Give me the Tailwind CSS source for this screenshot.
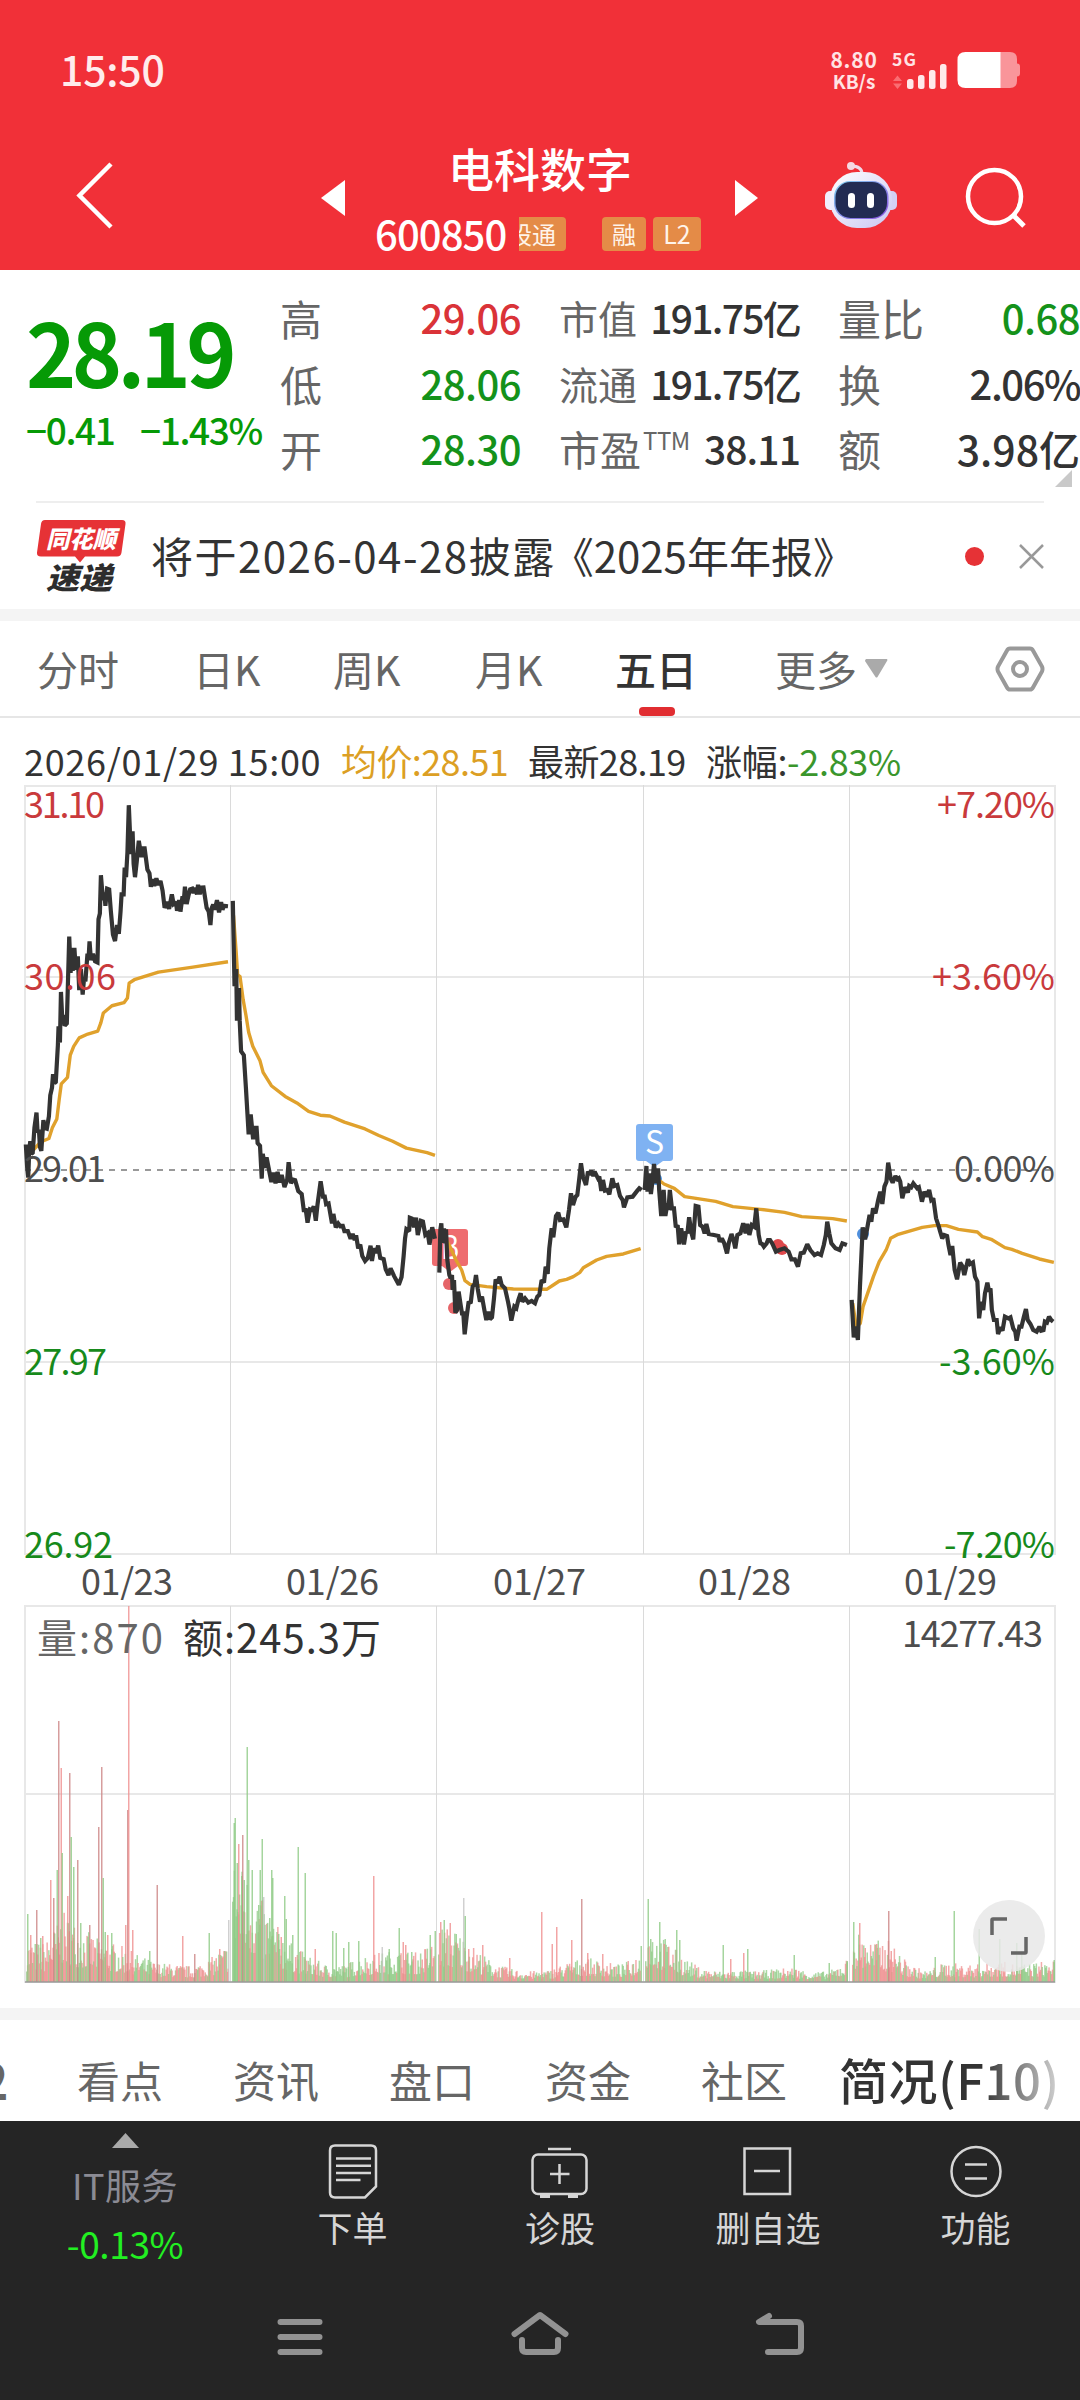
<!DOCTYPE html>
<html lang="zh-CN">
<head>
    <meta charset="UTF-8">
    <meta name="viewport" content="width=device-width, initial-scale=1.0">
    <title>电科数字 600850</title>
    <script src="https://cdn.jsdelivr.net/npm/@tailwindcss/browser@4"></script>
    <style>
        body {
            font-family: 'Noto Sans CJK SC', 'Noto Sans', sans-serif;
        }
    </style>
</head>
<body class="w-[1080px] h-[2400px] overflow-hidden bg-white text-[#333] whitespace-nowrap">

    <!-- 顶部 -->
    <header class="h-[270px] bg-[#f13038] text-white">
        <div class="h-[142px] pl-[60px] pr-[60px] flex items-center justify-between">
            <span class="-mt-[6px] text-[41px] font-medium leading-none tracking-[-0.2px] text-[#ffecec]">15:50</span>
            <div class="flex items-center">
                <div class="w-[52px] mr-3 -mt-[2px] text-center text-[#ffe3e4] font-bold text-[21px] leading-[22px]">
                    <div class="tracking-[0.8px]">8.80</div>
                    <div class="text-[19px]">KB/s</div>
                </div>
                <svg class="w-[128px] h-[44px]" viewBox="892 50 128 44">
                    <text x="892" y="67" font-size="17.5" font-weight="700" fill="#ffe3e4" textLength="24">5G</text>
                    <path d="M893 82l4.500-5.500 4.500 5.500zM893 84.500h9l-4.500 5.500z" fill="#fa6d72"/>
                    <g fill="#ffe9ea">
                        <rect x="907" y="80" width="6.500" height="10" rx="2.500"/>
                        <rect x="918" y="76" width="6.500" height="14" rx="2.500"/>
                        <rect x="929" y="71" width="6.500" height="19" rx="2.500"/>
                        <rect x="940" y="65" width="6.500" height="25" rx="2.500"/>
                    </g>
                    <path d="M1000 53h10q7 0 7 7v4.500q3 0 3 3v7q0 3-3 3v4.500q0 7-7 7h-10z" fill="#f9959a"/>
                    <path d="M1000.500 53h-35q-8 0-8 8v20q0 8 8 8h35z" fill="#fff"/>
                </svg>
            </div>
        </div>
        <div class="h-[128px] flex">
            <svg class="ml-[70px] mt-[18px] w-[46px] h-[72px]" viewBox="70 160 46 72" fill="none" stroke="#fff" stroke-width="4.500"><path d="M111 164L79.500 195.500 111 227"/></svg>
            <svg class="ml-[205px] mt-[38px] w-[24px] h-[36px]" viewBox="0 0 24 36"><path d="M24 0v36L0 18z" fill="#fff"/></svg>
            <div class="w-[390px] flex flex-col items-center">
                <h1 class="mt-[0px] text-[46px] font-medium leading-[50px]">电科数字</h1>
                <div class="mt-[21px] flex items-center h-[42px] self-start ml-[30px]">
                    <span class="-mt-[3px] text-[40px] font-medium leading-[42px] tracking-[-0.9px] w-[144px]">600850</span>
                    <span class="w-[47px] h-[34px] rounded-r-sm bg-[#e48b47] text-[24px] leading-[33px] text-[#fff4ea] overflow-hidden flex justify-end pr-[10px]"><span>股通</span></span>
                    <span class="ml-[36px] w-[44px] h-[34px] rounded-sm bg-[#e48b47] text-[24px] leading-[33px] text-[#fff4ea] text-center">融</span>
                    <span class="ml-[7px] w-[48px] h-[34px] rounded-sm bg-[#e48b47] text-[25px] leading-[33px] text-[#fff4ea] text-center">L2</span>
                </div>
            </div>
            <svg class="mt-[38px] w-[23px] h-[36px]" viewBox="0 0 23 36"><path d="M0 0v36L23 18z" fill="#fff"/></svg>
            <svg class="ml-[67px] mt-[18px] w-[72px] h-[70px]" viewBox="825 160 72 70">
                <defs>
                    <linearGradient id="shell" x1="0" y1="0" x2="1" y2="1"><stop offset="0" stop-color="#fff"/><stop offset=".55" stop-color="#e3e0f8"/><stop offset="1" stop-color="#c9c8f2"/></linearGradient>
                    <linearGradient id="rim" x1="0" y1="0" x2="1" y2="1"><stop offset="0" stop-color="#7fd0ee"/><stop offset="1" stop-color="#8a4fe0"/></linearGradient>
                </defs>
                <path d="M851 166q11 0 11 8" fill="none" stroke="#f0dcea" stroke-width="3"/>
                <circle cx="851" cy="166" r="4" fill="#f6d9e2"/>
                <rect x="825" y="191" width="12" height="19" rx="5" fill="#f0eefc"/>
                <rect x="885" y="191" width="12" height="19" rx="5" fill="#d3d0f4"/>
                <rect x="830" y="172" width="62" height="56" rx="27" fill="url(#shell)"/>
                <rect x="834" y="181" width="54.500" height="38" rx="16" fill="url(#rim)"/>
                <rect x="835.500" y="182" width="51.500" height="36" rx="15" fill="#222b52"/>
                <rect x="848" y="193" width="7" height="15" rx="3.500" fill="#fff"/>
                <rect x="867" y="193" width="7" height="15" rx="3.500" fill="#fff"/>
            </svg>
            <svg class="ml-[67px] mt-[24px] w-[64px] h-[64px]" viewBox="964 166 64 64" fill="none" stroke="#fff" stroke-width="4.500"><circle cx="994.500" cy="196.500" r="26.500"/><path d="M1013 215l11 11" stroke-width="5"/></svg>
        </div>
    </header>

    <!-- 行情 -->
    <section class="relative h-[231px] flex overflow-hidden">
        <div class="w-[280px] pl-[26px] text-[#069a06] font-medium">
            <div class="mt-[34px] h-[92px] text-[88px] leading-[92px] font-bold tracking-[-4.8px]"><span class="inline-block origin-left scale-x-[0.97]">28.19</span></div>
            <div class="mt-[11px] flex text-[37px] leading-[44px] tracking-[-1.4px]"><span class="w-[114px]">−0.41</span><span>−1.43%</span></div>
        </div>
        <div class="w-[241px] pt-[15px] text-[42px] leading-[65.500px] text-[#666]">
            <div class="flex justify-between"><span>高</span><span class="text-[40px] font-medium text-[#da3338] tracking-[-0.5px]">29.06</span></div>
            <div class="flex justify-between"><span>低</span><span class="text-[40px] font-medium text-[#14921a] tracking-[-0.5px]">28.06</span></div>
            <div class="flex justify-between"><span>开</span><span class="text-[40px] font-medium text-[#14921a] tracking-[-0.5px]">28.30</span></div>
        </div>
        <div class="ml-[38px] w-[241px] pt-[15px] text-[39px] leading-[65.500px] text-[#666]">
            <div class="flex justify-between"><span>市值</span><span class="font-medium text-[#333] tracking-[-1.7px]">191.75亿</span></div>
            <div class="flex justify-between"><span>流通</span><span class="font-medium text-[#333] tracking-[-1.7px]">191.75亿</span></div>
            <div class="flex justify-between"><span class="flex text-[41px]">市盈<span class="ml-[2px] -mt-[9px] text-[24px] tracking-[-0.5px]">TTM</span></span><span class="font-medium text-[#333] tracking-[-0.9px]">38.11</span></div>
        </div>
        <div class="ml-[38px] w-[242px] pt-[15px] text-[43px] leading-[65.500px] text-[#666]">
            <div class="flex justify-between"><span>量比</span><span class="text-[40px] font-medium text-[#14921a] tracking-[-0.5px]">0.68</span></div>
            <div class="flex justify-between"><span>换</span><span class="text-[40px] font-medium text-[#333] tracking-[-1.5px]">2.06%</span></div>
            <div class="flex justify-between"><span>额</span><span class="text-[41px] font-medium text-[#333]">3.98亿</span></div>
        </div>
        <svg class="absolute left-[1055px] top-[200px] w-[17px] h-[17px]" viewBox="0 0 17 17"><path d="M17 0v17H0z" fill="#c9c9c9"/></svg>
    </section>

    <!-- 公告 -->
    <section class="mx-[36px] h-[108px] border-t-2 border-[#eee] flex items-center">
        <svg class="w-[92px] h-[76px]" viewBox="36 517 92 76" font-weight="900" font-style="italic">
            <path d="M45 519h77q4 0 3.500 4l-4 28.500q-.5 4-4.500 4H85l-5 6-5-6H41q-4.500 0-4-4L41 523q.5-4 4-4z" fill="#e63236"/>
            <text x="46" y="547" font-size="24" fill="#fff" textLength="70" lengthAdjust="spacingAndGlyphs">同花顺</text>
            <text x="46" y="588" font-size="30" fill="#2d2d2d" textLength="66" lengthAdjust="spacingAndGlyphs">速递</text>
        </svg>
        <span class="ml-[23px] -mt-[2px] text-[42px] leading-none"><span class="tracking-[1.5px]">将于2026-04-28披露</span><span class="-ml-[4px]">《2025年年报》</span></span>
        <span class="ml-auto size-[19px] rounded-full bg-[#e63236]"></span>
        <svg class="ml-[35px] w-[25px] h-[25px]" viewBox="0 0 25 25" stroke="#999" stroke-width="2.500"><path d="M1 1l23 23M24 1L1 24"/></svg>
    </section>
    <div class="h-[12px] bg-[#f4f4f4]"></div>

    <!-- 周期切换 -->
    <nav class="h-[97px] border-b-2 border-[#e6e6e6] flex items-center text-[41px] text-[#666]">
        <span class="ml-[37px] w-[156px]">分时</span>
        <span class="w-[140px]">日K</span>
        <span class="w-[142px]">周K</span>
        <span class="w-[140px]">月K</span>
        <span class="relative h-full w-[160px] flex items-center font-medium text-[#333]">五日<i class="absolute left-[24px] bottom-0 w-[36px] h-[9px] rounded-[4px] bg-[#e12d31]"></i></span>
        <span>更多</span>
        <svg class="ml-[8px] w-[23px] h-[19px]" viewBox="0 0 23 19"><path d="M1 0h21q1 1 0 2L12.500 18q-1 1-2 0L0 2Q0 1 1 0z" fill="#aaa"/></svg>
        <svg class="ml-[107px] w-[50px] h-[48px]" viewBox="995 645 50 48" fill="none" stroke="#999" stroke-width="4"><path d="M1010 648.500h20q2 0 3 2l9 16q1 2.500 0 5l-9 16q-1 2-3 2h-20q-2 0-3-2l-9-16q-1-2.500 0-5l9-16q1-2 3-2z"/><circle cx="1020" cy="669" r="7"/></svg>
    </nav>

    <!-- 五日走势 -->
    <div class="h-[67px] pt-[17px] pl-[24px] flex text-[36px] leading-[50px]">
        <span class="w-[317px] tracking-[0.7px]">2026/01/29 15:00</span>
        <span class="w-[187px] text-[#dc9f24] tracking-[-0.6px]">均价:28.51</span>
        <span class="w-[178px] tracking-[-0.6px]">最新28.19</span>
        <span class="tracking-[-0.3px]">涨幅:<span class="text-[#3a962c]">-2.83%</span></span>
    </div>
    <svg class="block w-[1080px] h-[815px]" viewBox="0 785 1080 815" fill="none">
        <g stroke="#e8e8e8" stroke-width="2">
            <path d="M25 786h1030V1554H25z"/>
            <path d="M25 977h1030M25 1362h1030"/>
            <path d="M230.500 785v769M436.500 785v769M643.500 785v769M849.500 785v769" stroke-width="1" stroke="#dadada"/>
        </g>
        <path d="M25 1170h1030" stroke="#999" stroke-width="2" stroke-dasharray="6 6"/>
        <g fill="#ee6c6f"><rect x="432" y="1229" width="36" height="37" rx="3"/><path d="M442 1266h16l-8 6z"/></g>
        <g fill="#e56468"><circle cx="449" cy="1284" r="6"/><circle cx="454" cy="1308" r="6"/></g>
        <text x="441" y="1259" font-size="32" fill="#fff" textLength="18" lengthAdjust="spacingAndGlyphs">B</text>
        <g fill="#7fb2f2"><rect x="636" y="1124" width="37" height="37" rx="3"/><path d="M646 1161h17l-8.500 6z"/></g>
        <text x="645" y="1154" font-size="32" fill="#fff">S</text>
        <circle cx="656" cy="1179" r="6" fill="#4f96e4"/>
        <circle cx="863" cy="1234" r="6" fill="#4f8fdc"/>
        <g fill="#e0484c"><circle cx="778" cy="1245" r="6"/><circle cx="782" cy="1249" r="6"/></g>

        <!-- 均价线 -->
        <g stroke="#e0a12c" stroke-width="3.400" stroke-linejoin="round">
            <g transform="translate(0 770) scale(.3444 .3827)">
                <polyline vector-effect="non-scaling-stroke" points="78,1000 100,990 118,972 142,963 152,935 165,912 172,860 178,820 196,803 204,745 214,722 230,700 255,690 284,682 293,660 300,635 325,616 360,608 370,596 375,557 390,548 460,528 560,515 662,501"/>
                <polyline vector-effect="non-scaling-stroke" points="678,380 686,480 690,535 697,540 706,600 714,640 722,685 734,722 755,760 764,790 788,825 828,853 862,870 896,892 930,902 958,904 1000,920 1060,938 1100,955 1140,970 1180,988 1240,1000 1263,1007"/>
            </g>
            <g transform="translate(400 1120) scale(.3333)">
                <polyline vector-effect="non-scaling-stroke" points="125,335 150,380 168,420 185,450 195,482 210,493 260,500 340,507 440,508 460,495 478,483 500,478 520,470 540,457 550,443 590,420 620,409 670,402 722,386"/>
            </g>
            <g transform="translate(540 1100) scale(.3444 .3333)">
                <polyline vector-effect="non-scaling-stroke" points="345,240 360,252 390,265 420,290 510,304 560,320 640,328 710,337 760,350 850,356 891,363"/>
                <polyline vector-effect="non-scaling-stroke" points="908,610 918,680 930,670 938,620 968,530 985,485 1005,450 1018,415 1040,403 1110,382 1145,377 1180,377 1215,388 1270,396 1285,410 1310,418 1350,443 1370,448 1400,460 1450,477 1492,487"/>
            </g>
        </g>

        <!-- 分时线 -->
        <g stroke="#333" stroke-width="4.200" stroke-linejoin="miter" stroke-miterlimit="2">
            <g transform="translate(0 770) scale(.3444 .3827)">
                <polyline vector-effect="non-scaling-stroke" points="75,978 79,1040 82,1065 85,990 88,970 91,1003 95,1000 100,935 106,895 109,945 113,940 116,985 120,995 126,915 130,935 136,937 142,905 146,850 151,830 154,795 158,818 162,815 168,720 170,670 174,712 177,580 181,655 184,640 188,668 194,662 201,435 205,530 209,465 212,525 216,465 220,522 226,487 230,575 235,520 240,587 244,545 248,552 254,480 257,495 260,448 264,497 270,480 276,500 283,503 286,390 290,375 293,275 299,340 303,320 306,355 311,310 317,312 322,370 328,430 334,447 340,405 345,428 350,370 353,325 359,325 362,255 366,280 370,215 374,92 380,220 385,160 388,245 392,280 397,240 403,185 411,228 415,205 420,205 428,260 434,270 438,305 444,285 448,303 454,283 460,300 466,290 472,315 478,360 486,345 491,363 499,325 504,350 511,345 514,368 520,340 524,370 530,330 533,350 537,305 542,350 548,325 552,312 558,310 562,322 566,308 572,325 575,300 580,325 584,303 588,322 590,302 600,360 606,370 611,405 615,360 619,352 624,365 630,340 636,372 642,345 646,365 650,355 662,356"/>
                <polyline vector-effect="non-scaling-stroke" points="676,342 681,565 686,520 688,655 694,570 696,655 700,735 708,745 714,830 722,952 728,900 735,965 740,935 745,935 748,975 755,982 760,1068 763,1003 770,1040 774,1012 780,1040 788,1077 794,1052 800,1080 806,1050 812,1078 818,1058 826,1090 834,1070 838,1025 845,1080 850,1070 857,1072 866,1100 876,1108 882,1150 888,1150 893,1183 900,1148 906,1150 911,1140 917,1178 922,1135 931,1075 938,1115 943,1115 947,1135 954,1133 964,1185 968,1160 975,1195 982,1185 990,1195 994,1187 1000,1205 1010,1205 1018,1225 1024,1212 1030,1228 1034,1216 1040,1250 1046,1240 1052,1270 1060,1283 1068,1275 1076,1243 1080,1283 1086,1250 1092,1262 1098,1243 1104,1275 1114,1278 1120,1305 1128,1320 1134,1302 1144,1322 1158,1345 1166,1325 1172,1270 1176,1225 1180,1200 1188,1205 1190,1170 1196,1172 1202,1195 1208,1170 1213,1215 1222,1178 1228,1180 1235,1215 1242,1210 1247,1240 1255,1195 1263,1225"/>
            </g>
            <g transform="translate(400 1120) scale(.3333)">
                <polyline vector-effect="non-scaling-stroke" points="118,458 121,330 124,310 127,368 132,325 136,370 138,328 142,420 148,465 152,475 156,465 158,510 162,480 166,578 171,570 176,515 182,555 186,580 190,580 194,643 200,590 206,545 212,550 218,500 224,492 228,465 233,505 240,545 246,530 254,575 259,600 265,575 270,598 276,592 282,535 287,478 292,490 299,470 305,495 315,505 324,545 328,565 334,602 343,560 349,565 355,540 362,520 367,545 375,535 385,548 395,543 405,550 412,530 418,525 425,480 432,488 437,440 443,462 448,385 452,350 455,325 460,352 468,288 475,278 480,300 490,298 499,322 507,270 513,220 519,255 527,230 532,225 538,175 543,130 549,170 558,195 564,155 570,165 574,152 580,168 584,155 594,175 598,170 604,213 609,180 615,212 622,210 628,223 637,175 643,198 652,195 660,228 668,240 672,262 682,232 698,230 712,212 718,205 725,210"/>
            </g>
            <g transform="translate(540 1100) scale(.3444 .3333)">
                <polyline vector-effect="non-scaling-stroke" points="304,270 309,198 312,275 317,220 322,282 327,240 331,192 337,250 343,205 346,270 352,348 359,270 364,348 370,310 373,330 377,270 383,325 389,325 394,378 400,380 404,433 410,385 414,410 418,433 424,395 428,400 433,352 440,400 445,418 452,318 460,320 465,375 472,380 478,400 483,372 490,402 505,405 518,408 522,425 528,415 535,430 543,460 548,430 556,402 562,420 567,445 573,405 582,400 590,370 597,400 602,372 608,405 615,375 622,380 628,325 635,405 640,430 645,432 650,440 658,430 662,420 668,420 675,432 685,455 695,450 710,445 722,455 730,478 740,478 749,500 757,460 766,458 776,433 785,450 797,465 806,460 816,465 824,435 830,405 834,365 840,400 846,430 858,445 870,450 878,430 891,435"/>
                <polyline vector-effect="non-scaling-stroke" points="905,600 911,712 917,680 923,720 929,560 937,382 944,418 950,385 957,345 962,365 967,325 974,340 982,300 988,275 994,312 1000,260 1006,245 1011,188 1018,235 1024,248 1032,228 1038,238 1042,235 1046,245 1052,295 1060,262 1068,278 1072,258 1078,262 1084,250 1095,265 1100,262 1104,280 1109,305 1116,275 1122,290 1130,270 1136,300 1142,295 1150,355 1158,380 1162,395 1168,415 1174,405 1182,408 1186,435 1192,465 1197,438 1204,510 1211,538 1220,488 1227,500 1232,525 1243,478 1249,492 1257,487 1263,530 1270,545 1275,655 1281,605 1287,630 1292,580 1299,548 1304,575 1308,565 1312,630 1318,660 1326,660 1330,702 1337,682 1343,692 1350,650 1360,655 1366,652 1374,685 1380,695 1384,722 1392,680 1398,680 1405,650 1411,627 1416,660 1424,672 1432,690 1442,695 1450,680 1455,692 1462,690 1466,665 1472,668 1478,650 1484,660 1490,665"/>
            </g>
        </g>

        <g font-size="36" fill="#c93a3c">
            <text x="24" y="818" textLength="81">31.10</text>
            <text x="24" y="990" textLength="92">30.06</text>
            <text x="937" y="818" textLength="118">+7.20%</text>
            <text x="932" y="990" textLength="123">+3.60%</text>
        </g>
        <g font-size="36" fill="#4d4d4d">
            <text x="24" y="1182" textLength="82">29.01</text>
            <text x="954" y="1182" textLength="101">0.00%</text>
            <text x="81" y="1595" textLength="92">01/23</text>
            <text x="286" y="1595" textLength="93">01/26</text>
            <text x="493" y="1595" textLength="93">01/27</text>
            <text x="698" y="1595" textLength="93">01/28</text>
            <text x="904" y="1595" textLength="93">01/29</text>
        </g>
        <g font-size="36" fill="#178a1b">
            <text x="24" y="1375" textLength="83">27.97</text>
            <text x="24" y="1558" textLength="89">26.92</text>
            <text x="939" y="1375" textLength="116">-3.60%</text>
            <text x="944" y="1558" textLength="111">-7.20%</text>
        </g>
    </svg>

    <!-- 成交量 -->
    <div class="relative h-[408px]">
        <svg class="block w-[1080px] h-[390px]" viewBox="0 1600 1080 390" fill="none">
            <g stroke="#e8e8e8" stroke-width="2">
                <path d="M25 1606h1030v376H25zM25 1794h1030"/>
                <path d="M230.500 1606v376M436.500 1606v376M643.500 1606v376M849.500 1606v376" stroke-width="1" stroke="#dadada"/>
            </g>
            <g id="volume"></g>
            <path d="M25 1982h1030" stroke="#999" stroke-opacity=".7" stroke-width="2"/>
            <text x="37" y="1653" font-size="40" fill="#666" textLength="126">量:870</text>
            <text x="183" y="1653" font-size="40" fill="#333" textLength="198">额:245.3万</text>
            <text x="902" y="1647" font-size="36" fill="#4d4d4d" textLength="141">14277.43</text>
        </svg>
        <button class="absolute left-[973px] top-[300px] size-[72px] rounded-full bg-[#e8e8e8]/85 flex items-center justify-center">
            <svg class="w-[38px] h-[38px]" viewBox="0 0 38 38" fill="none" stroke="#666" stroke-width="3.500"><path d="M2 18V3q0-1 1-1h14M36 20v15q0 1-1 1H21"/></svg>
        </button>
    </div>
    <div class="h-[12px] bg-[#f4f4f4]"></div>

    <!-- 资讯栏目 -->
    <nav class="relative h-[101px] pt-[17px] overflow-hidden flex items-center text-[43px] leading-[60px] text-[#666]">
        <span class="w-[78px] -ml-[20px] mr-[19px] text-[48px] font-bold">2</span>
        <span class="w-[156px]">看点</span>
        <span class="w-[156px]">资讯</span>
        <span class="w-[156px]">盘口</span>
        <span class="w-[156px]">资金</span>
        <span class="w-[138px]">社区</span>
        <span class="text-[49px] font-medium text-[#333] tracking-[0.6px]">简况(F10)</span>
        <div class="absolute right-0 top-0 w-[98px] h-full bg-linear-to-r from-white/0 to-white"></div>
    </nav>

    <!-- 底部 -->
    <footer class="h-[279px] bg-[#252525] text-[#d6d6d6]">
        <div class="h-[160px] flex text-[35px] leading-[40px]">
            <div class="w-[250px] flex flex-col items-center">
                <svg class="mt-[12px] w-[27px] h-[15px]" viewBox="0 0 27 15"><path d="M13.500 0L27 15H0z" fill="#aaa"/></svg>
                <div class="mt-[16px] text-[#8b8b94] text-[36px] tracking-[0.5px]">IT服务</div>
                <div class="mt-[19px] text-[#22f022] text-[37px] tracking-[-0.4px]">-0.13%</div>
            </div>
            <div class="w-[205px] flex flex-col items-center">
                <svg class="mt-[21px] w-[60px] h-[60px]" viewBox="322 2142 60 60" fill="none" stroke="#d6d6d6" stroke-width="2.500"><path d="M334 2145.500h36q5 0 5 5v36l-11 11h-30q-5 0-5-5v-42q0-5 5-5zM335 2158.500h35M335 2165.700h35M335 2173h35M335 2180h24.500"/></svg>
                <div class="mt-[5px]">下单</div>
            </div>
            <div class="w-[210px] flex flex-col items-center">
                <svg class="mt-[21px] w-[60px] h-[60px]" viewBox="530 2142 60 60" fill="none" stroke="#d6d6d6" stroke-width="2.500"><rect x="532.500" y="2154.500" width="54" height="39.500" rx="5.500"/><path d="M548 2149h23M550 2174h19.500M559.500 2164v20"/><path d="M540 2196h10M568 2196h10" stroke-width="4"/></svg>
                <div class="mt-[5px]">诊股</div>
            </div>
            <div class="w-[206px] flex flex-col items-center">
                <svg class="mt-[21px] w-[60px] h-[60px]" viewBox="738 2142 60 60" fill="none" stroke="#d6d6d6" stroke-width="2.500"><path d="M744.500 2148.500h45.500v45.500h-45.500zM754 2171h26"/></svg>
                <div class="mt-[5px]">删自选</div>
            </div>
            <div class="w-[209px] flex flex-col items-center">
                <svg class="mt-[21px] w-[60px] h-[60px]" viewBox="945.500 2142 60 60" fill="none" stroke="#d6d6d6" stroke-width="2.500"><circle cx="975.500" cy="2171.500" r="24.500"/><path d="M964.500 2164.500h22M964.500 2178.500h22"/></svg>
                <div class="mt-[5px]">功能</div>
            </div>
        </div>
        <div class="pt-[24px] flex" >
            <svg class="ml-[270px] w-[60px] h-[60px]" viewBox="270 2305 60 60" fill="none" stroke="#929292" stroke-width="6" stroke-linecap="round"><path d="M280.500 2322h39M280.500 2337h39M280.500 2352h39"/></svg>
            <svg class="ml-[180px] w-[60px] h-[60px]" viewBox="510 2305 60 60" fill="none" stroke="#929292" stroke-width="6" stroke-linecap="round" stroke-linejoin="round"><path d="M514.500 2334l25.500-19 25.500 19M522 2340v8q0 4 4 4h28q4 0 4-4v-8"/></svg>
            <svg class="ml-[180px] w-[60px] h-[60px]" viewBox="750 2305 60 60" fill="none" stroke="#929292" stroke-width="6" stroke-linecap="round" stroke-linejoin="round"><path d="M769 2316l-10 6h38q4 0 4 4v22q0 4-4 4h-29"/></svg>
        </div>
    </footer>

    <script>
        const RED = '#ef8f8f', GREEN = '#8fcb86', DARK = '#cc8585', GRAY = '#c4c4c4';

        // 每日成交量的大致包络
        const days = [
            { x: 26, env: [42, 40, 70, 55, 42, 38, 28, 20, 18, 16, 24, 40], red: 0.62 },
            { x: 232, env: [130, 105, 68, 42, 28, 18, 17, 26, 30, 32, 30, 42], red: 0.38 },
            { x: 438, env: [58, 52, 34, 19, 13, 11, 12, 20, 25, 20, 18, 30], red: 0.55 },
            { x: 645, env: [56, 46, 26, 14, 11, 12, 11, 13, 15, 10, 11, 24], red: 0.45 },
            { x: 852, env: [54, 42, 42, 19, 11, 20, 18, 18, 21, 18, 20, 23], red: 0.55 }
        ];

        // [x, 高度, 颜色]
        const spikes = [
            [27, 68, GREEN], [30, 47, RED], [36, 72, DARK], [40, 44, GREEN], [42, 46, RED], [50, 102, RED], [53, 84, DARK], [56.500, 112, GREEN], [58, 261, DARK],
            [60.500, 214, RED], [61.500, 129, GREEN], [67, 86, RED], [69, 209, DARK], [70.500, 145, GREEN], [73, 115, GREEN], [77, 122, DARK], [80, 59, GREEN],
            [89, 57, DARK], [98, 155, DARK], [101, 215, DARK], [102.500, 104, GREEN], [104.500, 50, GREEN], [107, 47, RED], [111, 49, GREEN], [125, 57, RED],
            [127, 172, DARK], [128, 376, RED], [132, 52, RED], [149, 31, GREEN], [156.500, 97, DARK], [182, 46, RED], [194, 28, DARK], [208.500, 49, GREEN], [219, 33, RED], [228, 62, GRAY],
            [233.500, 159, GREEN], [234.500, 164, GREEN], [236.500, 119, GREEN], [238, 138, RED], [241, 106, GREEN], [242, 147, DARK], [243.500, 102, GREEN], [246.500, 235, GREEN], [248, 122, GREEN],
            [251.500, 112, GREEN], [258, 77, GREEN], [259.500, 112, GREEN], [261.500, 143, GREEN], [263, 85, GRAY], [269, 64, GREEN], [271, 112, GREEN], [272, 104, GREEN],
            [278, 48, GREEN], [280.500, 45, RED], [284, 86, GREEN], [285.500, 63, GREEN], [292, 47, GREEN], [297.500, 135, GREEN], [304.500, 109, GREEN], [314.500, 33, RED],
            [332, 51, GREEN], [335.500, 49, GREEN], [343, 34, GREEN], [348, 40, GREEN], [358, 41, GREEN], [373, 106, RED], [381.500, 35, GRAY], [388.500, 33, GREEN], [398.500, 54, GREEN],
            [402.500, 40, RED], [405, 37, RED], [411, 30, GREEN], [429.500, 47, GREEN], [434.500, 51, GREEN],
            [440, 60, RED], [443.500, 62, GREEN], [449.500, 59, RED], [455.500, 48, GREEN], [463, 84, GRAY], [464.500, 66, GREEN], [468, 33, RED], [482, 37, RED],
            [509, 24, RED], [541, 70, RED], [551.500, 38, RED], [556, 55, RED], [571, 42, RED], [581, 83, DARK], [587, 29, RED], [602, 28, RED], [640.500, 36, GREEN],
            [647.500, 83, GREEN], [650, 43, GREEN], [659, 60, GREEN], [663.500, 38, RED], [676, 52, GREEN], [679, 42, GREEN], [722.500, 37, GREEN], [730, 23, RED], [743, 29, RED], [747, 33, GREEN],
            [793.500, 27, GREEN], [828.500, 19, GREEN], [846.500, 21, GREEN],
            [853, 60, GREEN], [859, 59, RED], [864.500, 34, RED], [876, 38, RED], [888, 71, DARK], [890.500, 31, RED], [934.500, 25, GREEN], [953.500, 71, GREEN], [978.500, 53, GREEN],
            [999, 43, GREEN], [1016, 39, GREEN], [1021, 31, GREEN], [1053.500, 22, GREEN]
        ];

        let seed = 7;
        const rand = () => (seed = (seed * 16807) % 2147483647) / 2147483647;
        const bar = (x, h, color, opacity) =>
            `<rect x="${x.toFixed(1)}" y="${(1982 - h).toFixed(1)}" width="1.5" height="${h.toFixed(1)}" fill="${color}" fill-opacity="${opacity}"/>`;

        let bars = '';
        days.forEach(day => {
            for (let i = 0; i < 238; i++) {
                const p = i / 238 * 11;
                const k = Math.floor(p);
                const env = day.env[k] + (day.env[k + 1] - day.env[k]) * (p - k);
                const h = env * (0.25 + 0.75 * Math.pow(rand(), 1.3));
                bars += bar(day.x + i * 0.85, h, rand() < day.red ? RED : GREEN, 0.75);
            }
        });
        spikes.forEach(([x, h, color]) => { bars += bar(x, h, color, 0.8); });
        document.getElementById('volume').innerHTML = bars;
    </script>
</body>
</html>
